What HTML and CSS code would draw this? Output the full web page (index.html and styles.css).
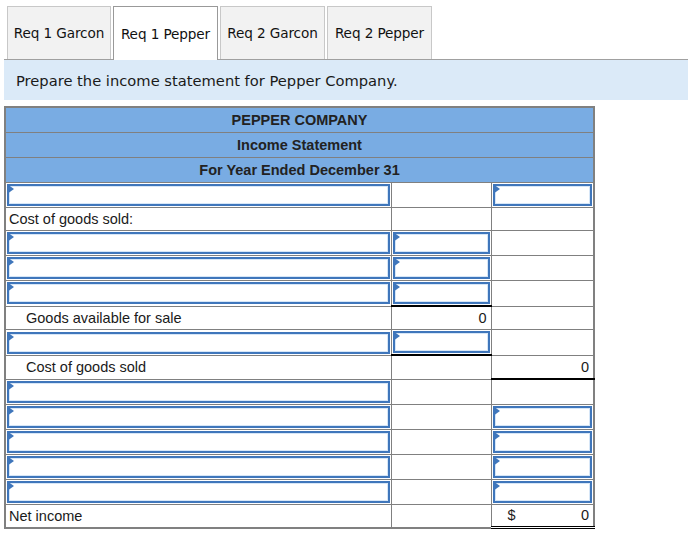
FILE: index.html
```html
<!DOCTYPE html>
<html>
<head>
<meta charset="utf-8">
<link rel="stylesheet" href="styles.css">
</head>
<body>
<div class="page">
  <div class="tabs">
    <div class="tab t1">Req 1 Garcon</div>
    <div class="tab t2 active">Req 1 Pepper</div>
    <div class="tab t3">Req 2 Garcon</div>
    <div class="tab t4">Req 2 Pepper</div>
  </div>
  <div class="prompt">Prepare the income statement for Pepper Company.</div>
  <table class="stmt">
    <colgroup><col class="c1"><col class="c2"><col class="c3"></colgroup>
    <tr class="hd"><td colspan="3">PEPPER COMPANY</td></tr>
    <tr class="hd"><td colspan="3">Income Statement</td></tr>
    <tr class="hd"><td colspan="3">For Year Ended December 31</td></tr>
    <tr><td class="in"><div class="box"><span class="tri"></span></div></td><td></td><td class="in"><div class="box"><span class="tri"></span></div></td></tr>
    <tr><td class="lbl">Cost of goods sold:</td><td></td><td></td></tr>
    <tr><td class="in"><div class="box"><span class="tri"></span></div></td><td class="in"><div class="box"><span class="tri"></span></div></td><td></td></tr>
    <tr><td class="in"><div class="box"><span class="tri"></span></div></td><td class="in"><div class="box"><span class="tri"></span></div></td><td></td></tr>
    <tr><td class="in"><div class="box"><span class="tri"></span></div></td><td class="in"><div class="box"><span class="tri"></span></div></td><td></td></tr>
    <tr><td class="lbl ind">Goods available for sale</td><td class="num top">0</td><td></td></tr>
    <tr><td class="in"><div class="box"><span class="tri"></span></div></td><td class="in"><div class="box"><span class="tri"></span></div></td><td></td></tr>
    <tr><td class="lbl ind">Cost of goods sold</td><td class="top"></td><td class="num bot">0</td></tr>
    <tr><td class="in"><div class="box"><span class="tri"></span></div></td><td></td><td></td></tr>
    <tr><td class="in"><div class="box"><span class="tri"></span></div></td><td></td><td class="in"><div class="box"><span class="tri"></span></div></td></tr>
    <tr><td class="in"><div class="box"><span class="tri"></span></div></td><td></td><td class="in"><div class="box"><span class="tri"></span></div></td></tr>
    <tr><td class="in"><div class="box"><span class="tri"></span></div></td><td></td><td class="in"><div class="box"><span class="tri"></span></div></td></tr>
    <tr><td class="in"><div class="box"><span class="tri"></span></div></td><td></td><td class="in"><div class="box"><span class="tri"></span></div></td></tr>
    <tr><td class="lbl">Net income</td><td></td><td class="num dbl"><span class="cur">$</span>0</td></tr>
  </table>
</div>
</body>
</html>
```

FILE: styles.css
```css
html, body {
  margin: 0;
  padding: 0;
  background: #ffffff;
}
.page {
  padding: 6px 0 0 4px;
  font-family: "DejaVu Sans", Verdana, sans-serif;
}
.tabs {
  display: flex;
  gap: 2px;
  padding-left: 3px;
  height: 53px;
  border-bottom: 1px solid #a0a0a0;
}
.tab {
  box-sizing: border-box;
  height: 53px;
  border: 1px solid #c8c8c8;
  border-bottom: none;
  background: #f2f2f2;
  color: #111;
  font-size: 13.6px;
  display: flex;
  align-items: center;
  justify-content: center;
  letter-spacing: -0.1px;
}
.t1 { width: 104px; }
.t2 { width: 105px; }
.t3 { width: 105px; }
.t4 { width: 105px; }
.tab.active {
  background: #ffffff;
  border-color: #999999;
  height: 54px;
  position: relative;
  z-index: 1;
}
.prompt {
  background: #dbeaf8;
  height: 40px;
  display: flex;
  align-items: center;
  padding-left: 12px;
  font-size: 14.7px;
  color: #1a1a1a;
  margin-bottom: 6px;
}
.stmt {
  border-collapse: collapse;
  table-layout: fixed;
  width: 589px;
  font-family: "Liberation Sans", Arial, sans-serif;
  font-size: 14.5px;
  color: #1a1a1a;
  border: 2px solid #808080;
}
.c1 { width: 386px; }
.c2 { width: 100px; }
.c3 { width: 103px; }
.stmt td {
  border: 1px solid #808080;
  height: 23.7px;
  padding: 0;
  box-sizing: border-box;
}
.stmt tr.hd td {
  background: #79ace3;
  text-align: center;
  font-weight: bold;
  height: 25px;
  color: #222;
}
.stmt td.lbl {
  padding-left: 3px;
}
.stmt td.ind {
  padding-left: 20px;
}
.stmt td.num {
  text-align: right;
  padding-right: 4px;
}
.stmt td.top {
  border-top: 2px solid #000;
}
.stmt td.bot {
  border-bottom: 2px solid #000;
}
.stmt td.dbl {
  border-bottom: 3px double #000;
  border-top: 1px solid #333;
}
.cur {
  float: left;
  padding-left: 16px;
}
.stmt td.in {
  padding: 1px;
}
.box {
  position: relative;
  box-sizing: border-box;
  height: 22px;
  border: 2px solid #3f76bb;
  box-shadow: inset 0 0 0 1px #d6e6f7;
  background: #fff;
}
.tri {
  position: absolute;
  left: -2px;
  top: -2px;
  width: 0;
  height: 0;
  border-left: 7px solid #3f76bb;
  border-top: 5px solid transparent;
  border-bottom: 5px solid transparent;
}
```
